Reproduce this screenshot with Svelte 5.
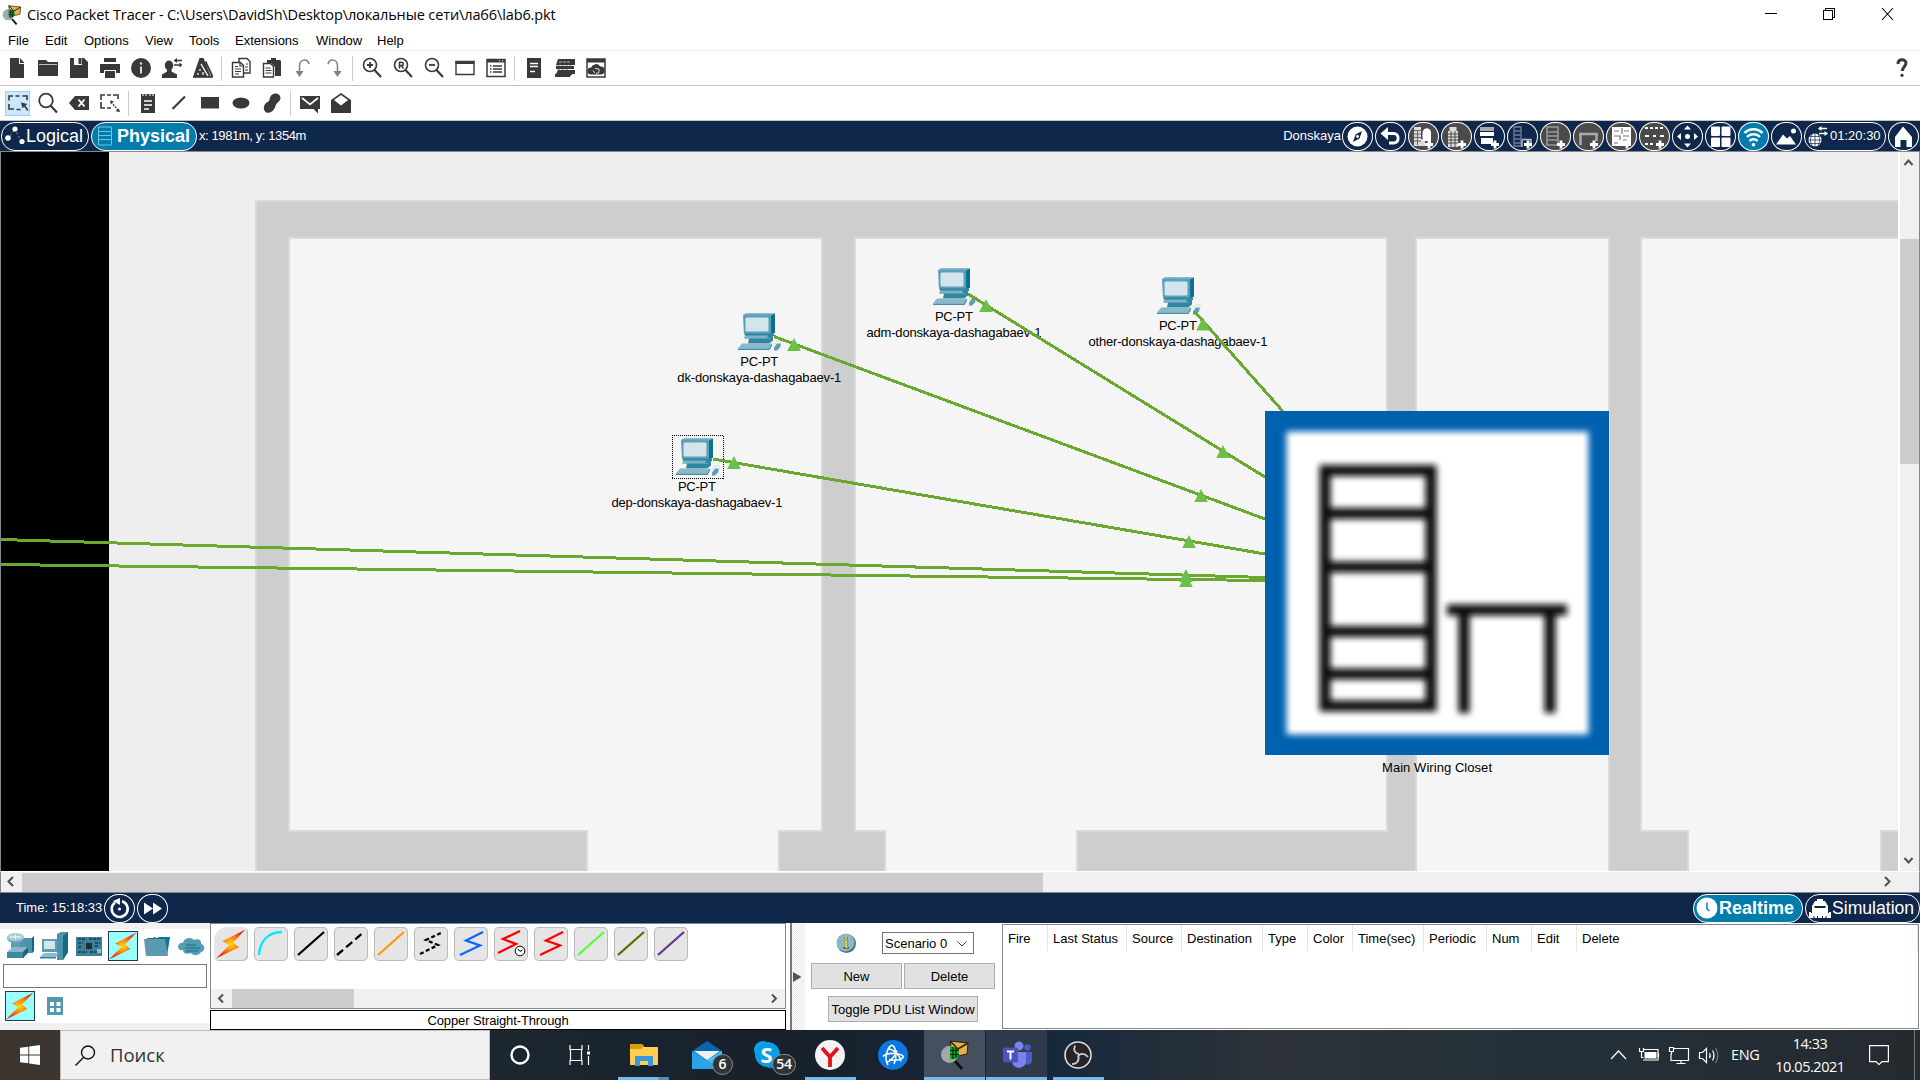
<script>
  const D = '#38393b';
  const wrap = (body, w = 22, h = 22) =>
    `<svg width="${w}" height="${h}" viewBox="0 0 ${w} ${h}" fill="none" style="display:block">${body}</svg>`;

  const docLines = `<path d="M7 9h8M7 13h8M7 17h5" stroke="#fff" stroke-width="1.6"/>`;

  const fileTools = [
    wrap(`<path d="M4 1h9v6h5v14H4z" fill="${D}"/><path d="M14 1l4.500 5H14z" fill="${D}"/>`),
    wrap(`<path d="M1 3h8l2 2h10v14H1z" fill="${D}"/><path d="M2 7.500h18" stroke="#bbb" stroke-width="1"/>`),
    wrap(`<path d="M2 1h14l4 4v16H2z" fill="${D}"/><path d="M6 1h8v7H6z" fill="#fff"/><path d="M10.500 1h3v6h-3z" fill="${D}"/>`),
    wrap(`<path d="M5 1h12v4H5zM1 7h20v9h-4v-3H5v3H1z" fill="${D}"/><path d="M6 14h10v7H6z" fill="${D}"/>`),
    wrap(`<circle cx="11" cy="11" r="10" fill="${D}"/><path d="M11 9.500v7" stroke="#ddd" stroke-width="2"/><circle cx="11" cy="6.500" r="1.200" fill="#ddd"/>`),
    wrap(`<ellipse cx="8" cy="8.500" rx="4.200" ry="5" fill="${D}"/><path d="M6 12h4.500v2.500l5.500 3V21H1v-3.500l5-3z" fill="${D}"/><path d="M14 3.500h7M13 8h7" stroke="${D}" stroke-width="1.400"/><path d="M16 1v5l-3.500-2.500zM18.500 5.500v5l3-2.500z" fill="${D}"/>`),
    wrap(`<path d="M7.500 1h4L19 20H1z" fill="${D}"/><path d="M9 7l7 12M8 12v2M6 16v2M11 15v3" stroke="#fff" stroke-width="1.300"/><path d="M13.500 4.500l7 15" stroke="${D}" stroke-width="1.800"/><path d="M1 20h20" stroke="${D}" stroke-width="1.600"/>`)
  ];
  const editTools = [
    wrap(`<path d="M9 1.500h8l3 3V16H9z" fill="#fff" stroke="${D}" stroke-width="1.400"/><path d="M2.500 5.500h8l3 3V20h-11z" fill="#fff" stroke="${D}" stroke-width="1.400"/><path d="M10 5.500V9h3.500M5 9.500h3M5 12h6M5 14.500h6M5 17h4M16 7h2M15 10h3M15 13h3" stroke="${D}" stroke-width="1.200"/>`),
    wrap(`<path d="M6 3h4V1h5v2h4l1 1v15h-6V10l-4-4H6z" fill="${D}"/><path d="M2.500 6.500h7l3 3V20h-10z" fill="#fff" stroke="${D}" stroke-width="1.400"/><path d="M4.500 11h5M4.500 13.500h6M4.500 16h6" stroke="${D}" stroke-width="1.200"/>`),
    wrap(`<path d="M7.500 15V9c0-7 8-8 9.500-2" stroke="#808080" stroke-width="1.500"/><path d="M3.500 14h8l-4 6z" fill="#808080"/>`),
    wrap(`<path d="M14.500 15V9c0-7-8-8-9.500-2" stroke="#808080" stroke-width="1.500"/><path d="M10.500 14h8l-4 6z" fill="#808080"/>`)
  ];
  const lens = (inner) =>
    wrap(`<circle cx="9" cy="8" r="6.500" stroke="${D}" stroke-width="1.600"/><path d="M13.500 13l6.500 7" stroke="${D}" stroke-width="2.200"/>${inner}`);
  const viewTools = [
    lens(`<path d="M6 8h6M9 5v6" stroke="${D}" stroke-width="1.800"/>`),
    lens(`<path d="M7.500 11.500V5.200h2a1.500 1.500 0 0 1 0 3.400h-2m2 0l2 3" stroke="${D}" stroke-width="1.600"/>`),
    lens(`<path d="M6 8h6" stroke="${D}" stroke-width="1.800"/>`),
    wrap(`<path d="M2 4.500h18v13H2z" stroke="${D}" stroke-width="1.400"/><path d="M1.500 4h19v3h-19z" fill="${D}"/>`),
    wrap(`<path d="M2 2.500h18v17H2z" stroke="${D}" stroke-width="1.500"/><path d="M2 2.500h18v3H2z" fill="${D}"/><path d="M8 9h9M8 12h9M8 15h9M5 9h1.500M5 12h1.500M5 15h1.500" stroke="${D}" stroke-width="1.500"/><path d="M14 3.800h1M17 3.800h1" stroke="#fff"/>`)
  ];
  const miscTools = [
    wrap(`<path d="M4 1h14v20H4z" fill="${D}"/><path d="M7 6.500h8M7 9.500h8M7 14.500h5" stroke="#fff" stroke-width="1.400"/>`),
    wrap(`<path d="M4 2h17v6H2zM2 9h18v3H2zM4 13h17v4H2zM1 17h15v3H1z" fill="${D}"/><path d="M5 5h11M3 8.500h16M3 12.500h12" stroke="#bbb" stroke-width="1" stroke-dasharray="3 1"/><path d="M15 19l5-5" stroke="${D}" stroke-width="2"/>`),
    wrap(`<path d="M2 2h18v18H2z" stroke="${D}" stroke-width="1.500"/><path d="M2 2h18v3.500H2z" fill="${D}"/><path d="M6 17.500a3.500 3.500 0 0 1 .2-7 5 5 0 0 1 9-1 4 4 0 0 1 1 8z" fill="${D}"/><path d="M8 13.500l2 2.500M10 11.500l4 .5v3.500l-3 1" stroke="#ddd" stroke-width="1"/>`)
  ];
  const toolGroups = [fileTools, editTools, viewTools, miscTools];

  const drawGroups = [
    [
      wrap(`<path d="M2 8.500V4h4M8.500 4h4M15.500 4H20v4M2 12v5h5M9.500 17.500h4" stroke="${D}" stroke-width="1.600"/><path d="M14 10.500l6.500 1.500-2 1.500 3 4.500-1.200 1-3.300-4.500-1.500 2z" fill="${D}"/>`),
      wrap(`<circle cx="9" cy="8.500" r="6.800" stroke="${D}" stroke-width="1.800"/><path d="M13.500 13.500l6.500 7" stroke="${D}" stroke-width="2.200"/>`),
      wrap(`<path d="M1 11l6-7h14v14H7z" fill="${D}"/><path d="M10.500 7.500l6 7M16.500 7.500l-6 7" stroke="#fff" stroke-width="1.900"/>`),
      wrap(`<path d="M2 8V3h4M8 3h4M14 3h5v4M2 10v6h4M8 16h4" stroke="${D}" stroke-width="1.600"/><path d="M12 10l7 8" stroke="${D}" stroke-width="1.200" stroke-dasharray="2 1"/><path d="M11 8.500l4 .8-3.200 2.600zM21 20l-4.500-.8 3.400-2.700z" fill="${D}"/>`)
    ],
    [
      wrap(`<path d="M4 2h14v19H4z" fill="${D}"/><path d="M6 1v3M9 1v3M13 1v3M16 1v3" stroke="#fff"/>${docLines}`),
      wrap(`<path d="M4.500 17L17 4.500" stroke="${D}" stroke-width="2.200"/>`),
      wrap(`<path d="M2 5h18v11.500H2z" fill="${D}"/>`),
      wrap(`<ellipse cx="11" cy="11" rx="8.500" ry="5.500" fill="${D}"/>`),
      wrap(`<path d="M9 5.500c2-6 10.500-5 10.500.5-.3 4-4 4-5 8-1.500 6-7.500 8.500-10.500 5.500-2.500-3-.8-8 2.500-9.500 2-1 1.500-1.500 2.500-4.500z" fill="${D}"/>`)
    ],
    [
      wrap(`<path d="M1 4h20v13h-2v4.500L14.500 17H1z" fill="${D}"/><path d="M3 6l8 6.500L19 6" stroke="#fff" stroke-width="1.700"/>`),
      wrap(`<path d="M1 8l10-7 10 7v13H1z" fill="${D}"/><path d="M4 8l7-5 7 5-7 5.500z" fill="#fff"/>`)
    ]
  ];

  const plus = `<path d="M17 22.500h8M21 18.500v8" stroke="#fff" stroke-width="2.800"/>`;
  const W = (b) => wrap(b, 31, 29);
  const physTools = [
    { g: W(`<circle cx="15.500" cy="14.500" r="10" fill="#fff"/><path d="M20 9l-2.500 7.500L11 20l2.500-7.500z" fill="#0f274b"/><circle cx="15.500" cy="14.500" r="1.400" fill="#fff"/>`) },
    { g: W(`<path d="M9 11.500h10a4.800 4.800 0 0 1 0 9.500H14" stroke="#fff" stroke-width="2.800"/><path d="M13 5v13l-7.500-6.500z" fill="#fff"/>`) },
    { tone: 'gray', g: W(`<path d="M6 5h7v19H6zM13 17h4v7h-4z" fill="#ddd"/><path d="M14.500 16v-5c0-6 8.500-6 8.500 0v10h-3V12h-2v4z" fill="#fff"/><path d="M15 11c0-6 8-6 8 0v8h-8z" fill="#fff"/><path d="M6 8.500h7M6 12h7M6 15.500h7M6 19h7M9.500 8v15" stroke="#666" stroke-width="1"/>${plus}`) },
    { tone: 'gray', g: W(`<path d="M7 9h10v16H7zM8.500 5h7v4h-7z" fill="#ddd"/><path d="M7 12h10M7 15h10M7 18h10M7 21h10M10 9v16M14 9v16" stroke="#4b4b4b" stroke-width="1"/>${plus}`) },
    { g: W(`<path d="M6 5h14v4H6z" fill="#aaa"/><path d="M6 10h14v4H6zM7 16h12v6H7z" fill="#fff"/>${plus}`) },
    { g: W(`<path d="M7 5h7v19H7zM7 9h7M7 13h7M7 17h7M7 21h7" stroke="#6f7c96" stroke-width="1.300"/><path d="M15 17.500h9v7M15 18v7" stroke="#bbb" stroke-width="1.500"/>${plus}`) },
    { tone: 'gray', g: W(`<path d="M7 5h11v18H7zM7 10h11M7 14h11M7 18h11" stroke="#999" stroke-width="1.600"/>${plus}`) },
    { tone: 'gray', g: W(`<path d="M6 12h19M7.500 13v10M23.500 13v6" stroke="#aaa" stroke-width="2.500"/>${plus}`) },
    { tone: 'gray', g: W(`<path d="M6 5h19v19H6z" fill="#fff"/><path d="M8 9h5M16 6v6M18 9h5M8 14h6v4M17 14h6M17 18h4M8 21h4" stroke="#777" stroke-width="1.200"/>${plus}`) },
    { tone: 'gray', g: W(`<path d="M6 6h19M6 22h10" stroke="#fff" stroke-width="2" stroke-dasharray="3 2"/><path d="M6 14h4M14 14h3M21 14h4" stroke="#fff" stroke-width="2"/>${plus}`) },
    { g: W(`<circle cx="15.500" cy="14.500" r="2.500" fill="#fff"/><path d="M15.500 3.500l3.500 4h-7zM15.500 25.500l3.500-4h-7zM5 14.500l4-3.500v7zM26 14.500L22 11v7z" fill="#fff"/>`) },
    { g: W(`<rect x="6" y="4.500" width="9" height="9.500" rx="1" fill="#fff"/><rect x="16.500" y="4.500" width="9" height="9.500" rx="1" fill="#fff"/><rect x="6" y="15.500" width="9" height="9.500" rx="1" fill="#fff"/><rect x="16.500" y="15.500" width="9" height="9.500" rx="1" fill="#fff"/>`) },
    { tone: 'on', g: W(`<path d="M6.500 11a12.500 12.500 0 0 1 18 0M9 15a9 9 0 0 1 13 0M11.500 19a5.500 5.500 0 0 1 8 0" stroke="#fff" stroke-width="2.500"/><circle cx="15.500" cy="22.800" r="1.800" fill="#fff"/>`) },
    { g: W(`<path d="M5 22.500l7-10 4 4 3-2.500 6 8.500z" fill="#fff"/><circle cx="22.500" cy="9" r="2.500" fill="#fff"/>`) }
  ];
  const globe = wrap(`<circle cx="9" cy="16" r="6.500" fill="#fff"/><path d="M2.500 16h13M9 9.500v13M4 12.500h10M4 19.500h10M6 10.500c-2 4-2 7 0 11M12 10.500c2 4 2 7 0 11" stroke="#0f274b" stroke-width=".7"/><path d="M13 4.500h8M13 9.500h8" stroke="#fff" stroke-width="1.500"/><path d="M15.500 2v5L12 4.500zM18.500 7v5l3.500-2.500z" fill="#fff"/>`, 23, 25);
  const home = W(`<path d="M15 4.500L24 15v10h-5.500v-7h-6v7H7V15z" fill="#fff"/>`);

  const menus = ['File', 'Edit', 'Options', 'View', 'Tools', 'Extensions', 'Window', 'Help'];
  const menuWidths = [37, 39, 61, 44, 46, 81, 61, 41];

  const bolt = (s) =>
    `<svg width="${s}" height="${s}" viewBox="0 0 30 30" style="display:block"><defs><radialGradient id="spark"><stop offset="0" stop-color="#ffe000"/><stop offset=".45" stop-color="#ff8a12"/><stop offset="1" stop-color="#ec2a1c"/></radialGradient></defs><path d="M28.500 1.500L7 12.500l6.500 3.500L1 28.500l21.500-10.500-5.500-4.500z" fill="url(#spark)"/></svg>`;

  const categories = [
    wrap(`<path d="M13 6h13l2-2v15l-2 2H13z" fill="#4d93ab"/><path d="M26 6l2-2v15l-2 2z" fill="#15677f"/><path d="M5 7h9v9H5z" fill="#5a9fb5"/><ellipse cx="9.500" cy="6.500" rx="8.500" ry="4.500" fill="#6fa9bc"/><ellipse cx="9.500" cy="5" rx="8.500" ry="4" fill="#a8cdd8"/><path d="M4 5h11M9.500 2.500v5" stroke="#fff"/><path d="M1 20l6-5h15l-5 5z" fill="#86b8c8"/><path d="M1 20h17v6H1z" fill="#3d88a2"/><path d="M17 20l5-5v6l-5 5z" fill="#15677f"/>`, 29, 28),
    wrap(`<path d="M17 2l4-2h7v20l-5 8h-6z" fill="#4a93ab"/><path d="M23 4l5-4v20l-5 8z" fill="#136c86"/><path d="M2 7h15v13H2z" fill="#5b9fb5"/><path d="M4 9h11v8H4z" fill="#d5e7ed"/><path d="M0 25l4-4h15l-3 4z" fill="#8db9c8"/><path d="M0 25h16v1.500H0z" fill="#2f86a0"/>`, 29, 28),
    wrap(`<path d="M1 5h26v19H1z" fill="#3d7f96"/><path d="M11 11h6v6h-6z" fill="#17313b"/><path d="M3 7h8M14 7h11M3 11h5M20 11h5M3 15h4M20 14h4M3 20h9M15 20h10" stroke="#143f50" stroke-width="1.500" stroke-dasharray="3 1"/><path d="M22 17h4v4h-4z" fill="#88bed0"/>`, 28, 28),
    bolt(30),
    wrap(`<path d="M4 4h6l1-1 3 1 2-1h11l-3 19H5z" fill="#14778f"/><path d="M1 5h21l3 17H3z" fill="#5b9bb1"/>`, 28, 25),
    wrap(`<path d="M3 15c-4-3-1-8 3-7 1-6 9-6 11-3 5-2 8 1 7 4 5 1 4 7 0 8-2 4-8 4-10 1-5 2-8 0-8-3z" fill="#559bb2"/><path d="M9 10h10M8 13h15M9 16h12" stroke="#2b7d98" stroke-width="1.300"/>`, 28, 23)
  ];

  const cables = [
    { c: '', bolt: true },
    { c: '#00e8ff', d: 'M5 28C6 14 14 5 28 5' },
    { c: '#000', d: 'M4 28L30 5' },
    { c: '#000', d: 'M3 28L30 5', dash: '8 4' },
    { c: '#ff9900', d: 'M4 28L30 5' },
    { c: '#000', d: 'M6 27L24 18 12 13 29 5', dash: '4 2.5' },
    { c: '#0a66ff', d: 'M6 28L26 18.500 12 13.500 29 5' },
    { c: '#f00', d: 'M4 26L22 17 9 12 26 4', clock: true },
    { c: '#f00', d: 'M6 28L26 18.500 12 13.500 29 5' },
    { c: '#55ff2a', d: 'M4 28L30 5' },
    { c: '#666600', d: 'M4 28L30 5' },
    { c: '#663399', d: 'M4 28L30 5' }
  ];

  const columns = [
    ['Fire', 45], ['Last Status', 79], ['Source', 55], ['Destination', 81], ['Type', 45], ['Color', 45],
    ['Time(sec)', 71], ['Periodic', 63], ['Num', 45], ['Edit', 45], ['Delete', 341]
  ];

  const pcs = [
    { x: 738, y: 313.5, cx: 759.3, label: 'dk-donskaya-dashagabaev-1', w: 164 },
    { x: 933, y: 268.5, cx: 953.9, label: 'adm-donskaya-dashagabaev-1', w: 175 },
    { x: 676, y: 438.5, cx: 696.9, label: 'dep-donskaya-dashagabaev-1', w: 171 },
    { x: 1157, y: 277.5, cx: 1177.9, label: 'other-donskaya-dashagabaev-1', w: 179 }
  ];
  const links = [
    [968, 294, 1265, 477], [774, 336.500, 1265, 519], [713, 459, 1265, 554],
    [1194, 311, 1283.500, 412], [0, 539.500, 1265, 577.500], [0, 564.500, 1265, 580.500]
  ];
  const ticks = [
    [794, 338], [986, 299], [734, 456], [1203, 317.5], [1223, 445], [1201, 489], [1189, 535], [1186, 569], [1186, 574]
  ];
  const walls = [
    [256, 200, 1650, 39], [256, 200, 33, 680], [822, 230, 33, 650], [1387, 230, 29, 650], [1609, 230, 32, 650],
    [256, 830, 331, 50], [779, 830, 106, 50], [1077, 830, 339, 50], [1609, 830, 79, 50], [1881, 830, 30, 50]
  ];

  const tracer = (s) =>
    `<svg width="${s}" height="${s}" viewBox="0 0 30 30" style="display:block"><path d="M10 1l18 2-1 11-14 3z" fill="#e3b347" stroke="#2a2010"/><path d="M10 1l8 8 10-6" fill="none" stroke="#2a2010" stroke-width="1.500"/><circle cx="9.500" cy="14.500" r="8.500" fill="#a5a8aa"/><path d="M10 7c5-1 9 3 9 7s-4 6-9 5z" fill="#0fa32a"/><path d="M13 7v12M16 8v10M10 10.500h9M10 14.500h9" stroke="#022b08" stroke-width="1.200"/><path d="M15 21l7 8" stroke="#111" stroke-width="2.800"/></svg>`;

  const apps = [
    { w: 60, g: wrap(`<circle cx="15" cy="15" r="8.500" stroke="#fff" stroke-width="2.400"/>`, 30, 30) },
    { w: 60, g: wrap(`<path d="M5 5v4.500h12V5M5 25v-4.500h12V25M5.500 9.500h11v11h-11z" stroke="#fff" stroke-width="1.200"/><path d="M23.500 5v5M23.500 16v9" stroke="#fff" stroke-width="1.200"/><path d="M22 11.500h3v3h-3z" fill="#fff"/>`, 30, 30) },
    { w: 67, bar: 'pair', g: wrap(`<path d="M1 4h12l2 2v5H1z" fill="#dd9c00"/><path d="M1 7h28v18H1z" fill="#ffcd52"/><path d="M1 7h13l-2 2H1z" fill="#dd9c00"/><path d="M6 26v-9q0-1 1-1h16q1 0 1 1v9h-5v-5h-8v5z" fill="#3b96db"/>`, 30, 30) },
    { w: 60, badge: '6', g: wrap(`<path d="M0 11L15 1l15 10v17H0z" fill="#0a64b4"/><path d="M0 11l15 9L30 11v18H0z" fill="#2aa3e8"/><path d="M15 20L30 11v18z" fill="#46c3f4"/><path d="M2 11h26l-13 9z" fill="#f0f0f0"/>`, 30, 30) },
    { w: 62, badge: '54', g: `<svg width="30" height="30" viewBox="0 0 30 30" style="display:block"><circle cx="10" cy="10" r="9" fill="#11a5ea"/><circle cx="19" cy="19" r="9.500" fill="#0b78cf"/><circle cx="14.500" cy="14.500" r="12.500" fill="#0a9ee6"/><text x="13.500" y="22.500" text-anchor="middle" font-family="Open Sans" font-weight="700" font-size="22" fill="#fff">S</text></svg>` },
    { w: 62, bar: 'short', g: wrap(`<circle cx="15" cy="15" r="15" fill="#f3f3f3"/><path d="M7 8l8 9 8-9M15 16v11" stroke="#e0121a" stroke-width="3.800"/>`, 30, 30) },
    { w: 63, g: wrap(`<circle cx="15" cy="15" r="15" fill="#0a78e0"/><path d="M10 25C5 17 11 4 14.500 5.500 18 7 19 18 16 24M5 16.500c5-5 18-3 20-.5s-7 5.500-14 3.500M10.500 9c5 0 13 8 12 12.500M19 10.500C17 17 11 23 8 22" stroke="#fff" stroke-width="1.600"/>`, 30, 30) },
    { w: 61, bar: 'full', tone: 'active', g: tracer(30) },
    { w: 61, bar: 'full', tone: 'open', g: `<svg width="30" height="30" viewBox="0 0 30 30" style="display:block"><circle cx="17" cy="6" r="4.500" fill="#7b83eb"/><circle cx="25.500" cy="7.500" r="3.200" fill="#5059c9"/><path d="M20 12h10v8c0 5-6 6-8 3z" fill="#5059c9"/><path d="M10 12h14v9c0 9-14 9-14 0z" fill="#7b83eb"/><rect x="1" y="7.500" width="15" height="15" rx="1.500" fill="#4b53bc"/><path d="M5 11.500h7M8.500 11.500v8" stroke="#fff" stroke-width="2" fill="none"/></svg>` },
    { w: 62, bar: 'short', g: wrap(`<circle cx="15" cy="15" r="13" fill="#262427" stroke="#ddd" stroke-width="1.600"/><path d="M12 5.500c-2 5 0 8 4 8.500M25 17c-3-4-8-4-10-.5M9 24c5 0 8-4 6-8.500" stroke="#cfcfcf" stroke-width="1.800"/>`, 30, 30) }
  ];
</script>

{#snippet html(s, cls)}<span class={cls}>{@html s}</span>{/snippet}

<div class="app">
  <header class="title">
    {@render html(tracer(20), 'logo')}
    <span class="caption">Cisco Packet Tracer - C:\Users\DavidSh\Desktop\локальные сети\лаб6\lab6.pkt</span>
    <span class="sys">
      <svg width="130" height="28" viewBox="0 0 130 28" fill="none" stroke="#000" stroke-width="1.1" shape-rendering="crispEdges"><path d="M0 13.500h12M58.500 10.500h9v9h-9zM60.500 10V8.500h9v9H68" /><path d="M117 8l11 12M128 8l-11 12" shape-rendering="auto" /></svg>
    </span>
  </header>

  <nav class="menu">
    {#each menus as m, i}<span style="width:{menuWidths[i]}px">{m}</span>{/each}
  </nav>

  <div class="tools first">
    {#each toolGroups as group, gi}
      {#if gi}<i class="sep"></i>{/if}
      {#each group as g}{@render html(g, 'tool')}{/each}
    {/each}
    <span class="help"><svg width="14" height="20" viewBox="0 0 14 20" fill="none"><path d="M3 6c0-6 8-5 8-1 0 3.500-3.500 4-3.800 8" stroke="#38393b" stroke-width="3" /><circle cx="7" cy="17.300" r="1.600" fill="#38393b" /></svg></span>
  </div>

  <div class="tools second">
    {#each drawGroups as group, gi}
      {#if gi}<i class="sep"></i>{/if}
      {#each group as g, i}{@render html(g, gi === 0 && i === 0 ? 'tool picked' : 'tool')}{/each}
    {/each}
  </div>

  <div class="bar">
    <button class="pill logical">
      <svg width="23" height="26" viewBox="0 0 23 26"><path d="M6 16l7-10 6 12" stroke="#8896b0" stroke-dasharray="2 2" fill="none" /><circle cx="13" cy="6" r="2.600" fill="#fff" /><circle cx="6" cy="15" r="2.800" fill="#fff" /><circle cx="20" cy="18.500" r="2.600" fill="#fff" /></svg>Logical
    </button>
    <button class="pill on physical">
      <svg width="16" height="20" viewBox="0 0 16 20"><path d="M1.500 1h13v18h-13zM1.500 5.500h13M1.500 9.500h13M1.500 13.500h13" stroke="#6fc3dc" fill="none" /></svg>Physical
    </button>
    <span class="coords">x: 1981m, y: 1354m</span>
    <span class="place">Donskaya</span>
    {#each physTools as t}<span class="round {t.tone ?? ''}">{@html t.g}</span>{/each}
    <span class="pill clock">{@html globe}01:20:30</span>
    <span class="round">{@html home}</span>
  </div>

  <div class="workspace">
    <svg class="floor" width="1897" height="719" viewBox="1 152 1897 719">
      <defs>
        <filter id="soft" x="-10%" y="-10%" width="120%" height="120%"><feGaussianBlur stdDeviation="3.2" /></filter>
      </defs>
      <rect x="1" y="152" width="1900" height="720" fill="#eee" />
      <rect x="1" y="152" width="108" height="720" fill="#000" />
      <rect x="256" y="202" width="1650" height="680" fill="#f5f5f5" />
      <g fill="#dadada">
        {#each walls as [x, y, w, h]}<rect x={x - 1} y={y} width={w + 2} height={h} />{/each}
      </g>
      <g fill="#cecece">
        {#each walls as [x, y, w, h]}<rect x={x + 1} y={y + 2} width={w - 2} height={h - 4} />{/each}
      </g>
      {#each pcs as p}
        <g transform="translate({p.x} {p.y})">
          <path d="M5 2l3-2h29v19l-4 2H6z" fill="#5aa0b8" />
          <path d="M33 2l4-2v19l-4 2z" fill="#0d708c" />
          <path d="M5 1.500L8 0h29l-4 2z" fill="#6fabc0" />
          <rect x="7.500" y="4" width="23" height="14" rx="1.500" fill="#d3e4eb" />
          <path d="M7 20h29v2l-3 3H7z" fill="#2f86a0" />
          <path d="M7 22h23l-1 3H6z" fill="#7eb2c5" />
          <path d="M11 25h21l3-2v4l-4 3H10z" fill="#2f86a0" />
          <path d="M4 30h30l-2 5H0z" fill="#8ab8c9" />
          <path d="M0 35h31l3-5v2l-2.500 4.500H0z" fill="#3f8fa8" />
          <path d="M36 34l3-4h4l-1 4-3 3h-3z" fill="#5a9fb6" />
          <path d="M36 31c4-6 9-4 7-1" fill="none" stroke="#c7dbe3" />
        </g>
        <text x={p.cx} y={p.y + 52} textLength="38">PC-PT</text>
        <text x={p.cx} y={p.y + 68.5} textLength={p.w}>{p.label}</text>
      {/each}
      <path d="M672 435.500h52M672 478.500h52M672.500 435v44M723.500 436v43" fill="none" stroke="#000" stroke-dasharray="1 1" shape-rendering="crispEdges" />
      <g stroke="#6ba82f" stroke-width="3" shape-rendering="crispEdges">
        {#each links as [x1, y1, x2, y2]}<line {x1} {y1} {x2} {y2} />{/each}
      </g>
      {#each ticks as [x, y]}<path d="M{x} {y}l6.800 13h-13.600z" fill="#6cc04a" />{/each}
      <rect x="1265" y="411" width="344" height="344" fill="#0061af" />
      <rect x="1286.5" y="431.5" width="302" height="303" fill="#fff" filter="url(#soft)" />
      <rect x="1292" y="437" width="291" height="292" fill="#fff" />
      <g stroke="#080808" stroke-width="11" fill="none" filter="url(#soft)">
        <path d="M1325 470.500h106V706h-106zM1325 513.500h106M1325 567h106M1325 631.500h106M1325 674h106M1447 610h120M1464 610v103M1550 610v103" />
      </g>
      <text x="1437" y="772" textLength="110">Main Wiring Closet</text>
    </svg>
    <div class="vscroll">
      <svg width="19" height="20" viewBox="0 0 19 20"><path d="M4.500 13l4-4.500 4 4.500" /></svg>
      <i class="vthumb"></i>
      <svg class="end" width="19" height="20" viewBox="0 0 19 20"><path d="M4.500 7l4 4.500 4-4.500" /></svg>
    </div>
  </div>
  <div class="hscroll">
    <svg width="21" height="20" viewBox="0 0 21 20"><path d="M12 5L7.500 9.500 12 14" /></svg>
    <i class="hthumb"></i>
    <svg class="far" width="21" height="20" viewBox="0 0 21 20"><path d="M9 5l4.500 4.500L9 14" /></svg>
  </div>

  <div class="bar lower">
    <span class="time">Time: 15:18:33</span>
    <span class="round">{@html W(`<path d="M11 8.500a8 8 0 1 0 7-1.200" stroke="#fff" stroke-width="2.600"/><path d="M9 7l7-3v7z" fill="#fff"/><circle cx="15.500" cy="15" r="1.600" fill="#fff"/>`)}</span>
    <span class="round">{@html W(`<path d="M7 8.500l9 6-9 6zM16 8.500l9 6-9 6z" fill="#fff"/>`)}</span>
    <button class="pill on realtime">
      <svg width="22" height="22" viewBox="0 0 22 22"><circle cx="11" cy="11" r="10.500" fill="#fff" /><path d="M11 5.500v6.500l2.500 2" stroke="#027cad" stroke-width="1.500" fill="none" /></svg>Realtime
    </button>
    <button class="pill simulation">
      <svg width="22" height="22" viewBox="0 0 22 22"><path d="M3 18V9l3-5h2V2h6v2h2l3 5v7h1v-1h2v6H0v-6h2v1h1z" fill="#fff" /><path d="M5.500 10h11" stroke="#0f274b" stroke-width="2" /><path d="M5 19v2M8.500 19v2M13.500 19v2M17 19v2" stroke="#0f274b" stroke-width="1" /></svg>Simulation
    </button>
  </div>

  <section class="panel">
    <div class="devices">
      <div class="cats">{#each categories as c, i}<span class="cat" class:sel={i === 3}>{@html c}</span>{/each}</div>
      <div class="field"></div>
      <div class="subs">
        <span class="cat sel">{@html bolt(30)}</span>
        <svg width="16" height="20" viewBox="0 0 16 20"><path d="M0 1h16v18H0z" fill="#5299b0" /><path d="M3 6h4v4H3zM9.500 6h4v4h-4zM3 12h4v4H3zM9.500 12h4v4h-4z" fill="#fff" /></svg>
      </div>
    </div>

    <div class="cables">
      <div class="tray">
        <div class="row">
          {#each cables as c}
            <span class="cable" class:cut={c.bolt}>
              {#if c.bolt}{@html bolt(32)}{:else}
                <svg width="34" height="34" viewBox="0 0 34 34" fill="none">
                  <path d={c.d} stroke={c.c} stroke-width="2.300" stroke-dasharray={c.dash} />
                  {#if c.clock}<circle cx="26" cy="24" r="4.800" fill="#fff" stroke="#000" /><path d="M24 22l2 2.500 2.500-1.500" stroke="#000" />{/if}
                </svg>
              {/if}
            </span>
          {/each}
        </div>
        <div class="trayscroll">
          <svg width="21" height="19" viewBox="0 0 21 19"><path d="M12 5.500L8 9.500l4 4" /></svg>
          <i></i>
          <svg class="far" width="21" height="19" viewBox="0 0 21 19"><path d="M8 5.500l4 4-4 4" /></svg>
        </div>
      </div>
      <div class="cablename">Copper Straight-Through</div>
    </div>

    <div class="split"><svg width="9" height="10" viewBox="0 0 9 10"><path d="M0 0l8.500 5L0 10z" fill="#555" /></svg></div>

    <div class="scenario">
      <div class="srow">
        <svg width="20" height="20" viewBox="0 0 20 20"><circle cx="10.500" cy="10.500" r="9.500" fill="#456e7d" /><circle cx="9.500" cy="9.500" r="9" fill="#8cb7c5" /><path d="M8 5h4M8 8.500h3V15M7 15h6" stroke="#6b7238" stroke-width="2.200" fill="none" /><path d="M8.500 5h2.500M8.500 8.500h2V15" stroke="#f0e44a" stroke-width="1.600" fill="none" /></svg>
        <span class="combo">Scenario 0<svg width="10" height="6" viewBox="0 0 10 6"><path d="M.5.5L5 5 9.500.5" fill="none" stroke="#444" /></svg></span>
      </div>
      <div class="brow"><button>New</button><button>Delete</button></div>
      <button class="toggle">Toggle PDU List Window</button>
    </div>

    <div class="list">
      {#each columns as [name, w]}<span style="width:{w}px">{name}</span>{/each}
    </div>
  </section>

  <footer class="taskbar">
    <span class="start"><svg width="20" height="20" viewBox="0 0 20 20" fill="#fff"><path d="M0 2.800l8.300-1.100v7.800H0zM9.200 1.500L20 0v9.500H9.200zM0 10.400h8.300v7.900L0 17.200zM9.200 10.400H20V20L9.200 18.500z" /></svg></span>
    <span class="search"><svg width="21" height="21" viewBox="0 0 21 21" fill="none" stroke="#111" stroke-width="1.400"><circle cx="13" cy="7.500" r="6.500" /><path d="M8.500 12.500L.5 20.500" /></svg>Поиск</span>
    {#each apps as a}
      <span class="appcell {a.tone ?? ''} {a.bar ?? ''}" style="width:{a.w}px">{@html a.g}{#if a.badge}<b class="badge" class:wide={a.badge.length > 1}>{a.badge}</b>{/if}</span>
    {/each}
    <span class="status">
      <svg width="120" height="24" viewBox="0 0 120 24" fill="none" stroke="#fff" stroke-width="1.200">
        <path d="M1 16l7.500-8 7.500 8" />
        <path d="M34 6.500h14v10.500H33M48.500 10v4M29.500 5v3.500h4V5M31.500 8.500v6h2" /><rect x="34.500" y="9" width="12" height="6.500" fill="#fff" stroke="none" />
        <path d="M64 5.500h14.500v12H61V11M71 17.500v3M66.500 20.500h9M59.500 4.500h4v4h-4zM61.500 8.500v3" />
        <path d="M89.500 9.500h3l4-4v14l-4-4h-3zM99.500 10q1.500 2.500 0 5M102.500 7.500q3 5 0 10" /><path d="M105.500 5q4.500 7.500 0 15" stroke="#777" />
      </svg>
      <span class="lang">ENG</span>
      <span class="date"><span>14:33</span><span>10.05.2021</span></span>
      <svg class="note" width="20" height="20" viewBox="0 0 20 20" fill="none" stroke="#fff" stroke-width="1.200"><path d="M.6.6h18.800v16H13l-3 3-3-3H.6z" /></svg>
      <i class="desk"></i>
    </span>
  </footer>
</div>

<style>
  :global(body) { margin: 0; background: #fff; overflow: hidden; }
  .app { width: 1920px; height: 1080px; display: flex; flex-direction: column; background: #fff; color: #000; font: 13px/16px "Liberation Sans", Arial, sans-serif; overflow: hidden; }
  .app * { box-sizing: border-box; }
  svg { display: block; flex: none; }
  button { font: inherit; color: inherit; margin: 0; padding: 0; white-space: nowrap; }

  .title { height: 28px; display: flex; align-items: center; padding-left: 2px; }
  .logo { width: 25px; padding-top: 1px; }
  .caption { padding-top: 1px; font: 14.5px/28px "Open Sans", "Noto Sans", sans-serif; letter-spacing: -0.12px; white-space: nowrap; }
  .sys { margin-left: auto; padding-right: 25px; }
  .menu { height: 23px; display: flex; align-items: center; padding: 4px 0 0 8px; border-bottom: 1px solid #f0f0f0; }
  .menu span { white-space: nowrap; flex: none; }

  .tools { display: flex; align-items: center; padding-left: 1px; border-bottom: 1px solid #c0c0c0; }
  .first, .second { height: 35px; }
  .tool { width: 31px; height: 26px; display: grid; place-items: center; }
  .picked { width: 25px; height: 25px; margin: 0 2px 0 4px; background: #cce8ff; border: 1px solid #99d1ff; }
  .sep { width: 1px; height: 25px; margin: 0 3px; background: #ccc; }
  .help { margin-left: auto; padding-right: 11px; }

  .bar { height: 31px; flex: none; display: flex; align-items: center; background: #0f274b; color: #fff; border-bottom: 1px solid #828790; }
  .pill { height: 29px; border: 1px solid #fff; border-radius: 14px; background: #0f274b; display: flex; align-items: center; flex: none; color: #fff; }
  .pill.on { background: #027cad; font-weight: 700; }
  .logical { width: 88px; margin-left: 1px; font-size: 18px; gap: 1px; }
  .physical { width: 106px; margin-left: 2px; padding-left: 5px; gap: 4px; font-size: 18px; }
  .coords { margin-left: 2px; letter-spacing: -0.4px; }
  .place { margin-left: auto; margin-right: 1px; }
  .round { width: 31px; height: 29px; margin-right: 2px; border-radius: 15px; box-shadow: inset 0 0 0 1px #fff; flex: none; }
  .round.gray { background: #4b4b4b; }
  .round.on { background: #027cad; }
  .clock { width: 82px; padding-left: 1px; margin-right: 2px; gap: 1px; }
  .bar > .round:last-child { margin-right: 1px; }

  .workspace { height: 719px; display: flex; border-left: 1px solid #828790; border-right: 1px solid #828790; }
  .floor text { font: 13px "Liberation Sans", Arial, sans-serif; text-anchor: middle; fill: #000; }
  .vscroll { width: 21px; background: #f0f0f0; border-left: 2px solid #fff; display: flex; flex-direction: column; }
  .vthumb { height: 225px; margin-top: 67px; background: #cdcdcd; }
  .end { margin-top: auto; }
  .vscroll path, .hscroll path, .trayscroll path { fill: none; stroke: #505050; stroke-width: 2; }
  .hscroll { height: 22px; display: flex; align-items: center; background: #f0f0f0; border: 1px solid #828790; border-top-color: #fff; }
  .hthumb { width: 1021px; height: 19px; background: #cdcdcd; }
  .far { margin-left: auto; }
  .hscroll .far { margin-right: 22px; }

  .lower { height: 30px; border-bottom: 0; }
  .time { width: 88px; margin-left: 16px; white-space: nowrap; }
  .realtime { width: 110px; margin-left: auto; margin-right: 2px; padding-left: 2px; gap: 1px; font-size: 18px; }
  .simulation { width: 115px; padding-left: 3px; gap: 1px; font-size: 17.6px; }

  .panel { height: 107px; display: flex; background: #fff; }
  .devices { width: 210px; border: solid #f0f0f0; border-width: 6px 0 7px; padding: 2px 3px 0; }
  .cats { height: 33px; display: flex; padding-left: 2px; }
  .cat { width: 30px; height: 30px; margin-right: 4.300px; display: grid; place-items: center; flex: none; }
  .sel { background: #99ffff; box-shadow: inset 0 0 0 1px #1e3c46; }
  .field { height: 24px; border: 1px solid #767676; }
  .subs { display: flex; align-items: center; padding: 3px 0 0 2px; gap: 8px; }

  .cables { width: 576px; display: flex; flex-direction: column; }
  .tray { height: 86px; border: 1px solid #828790; display: flex; flex-direction: column; }
  .row { display: flex; gap: 6px; padding: 3px 3px 0; }
  .cable { width: 34px; height: 34px; border-radius: 5px; background: #e5e5e5; box-shadow: inset 0 0 0 1px #bbb; flex: none; }
  .cable.cut { border-top-left-radius: 14px; padding: 1px; box-shadow: inset -1px -1px 0 #bbb; }
  .trayscroll { margin-top: auto; height: 19px; background: #f0f0f0; display: flex; }
  .trayscroll i { width: 122px; background: #cdcdcd; }
  .cablename { height: 20px; margin-top: 1px; border: 1px solid #000; text-align: center; line-height: 19px; letter-spacing: -0.12px; }

  .split { width: 15px; margin: 0 3px 0 4px; display: flex; align-items: center; padding-left: 1px; border-left: 2px solid #777; background: repeating-conic-gradient(#e9e9e9 0 25%, #fff 0 50%) 0 0 / 2px 2px; }
  .scenario { width: 191px; padding: 9px 4px 0 3px; display: flex; flex-direction: column; }
  .srow { display: flex; align-items: center; padding-left: 25px; gap: 26px; }
  .combo { width: 92px; height: 22px; border: 1px solid #707070; display: flex; align-items: center; justify-content: space-between; padding: 1px 6px 0 2px; white-space: nowrap; }
  .brow { display: flex; gap: 2px; margin-top: 9px; }
  .brow button, .toggle { height: 26px; padding-top: 1px; background: #e1e1e1; border: 1px solid #adadad; }
  .brow button { width: 91px; }
  .toggle { width: 150px; margin: 7px 0 0 17px; }
  .list { flex: 1; height: 105px; margin: 1px 1px 0 3px; border: 1px solid #828790; display: flex; }
  .list span { height: 26px; flex: none; padding-left: 5px; line-height: 27px; border-right: 1px solid #e5e5e5; white-space: nowrap; }

  .taskbar { height: 50px; display: flex; background: linear-gradient(90deg, #1c2730 0, #1c2730 490px, #17202b 780px, #18293c 1070px, #2d3338 1270px, #243039 1560px, #252a2f 1920px); color: #fff; font-family: "Open Sans", "Noto Sans", sans-serif; }
  .start { width: 60px; background: #3c342f; display: grid; place-items: center; }
  .search { width: 430px; background: #f1f1f1; border: 1px solid #bdbdbd; color: #333; display: flex; align-items: center; padding-left: 14px; gap: 14px; font-size: 18.500px; line-height: 24px; }
  .appcell { position: relative; display: grid; place-items: center; flex: none; }
  .active { background: #454f5d; }
  .open { background: #2f3a4a; margin-left: 1px; }
  .short, .full, .pair { background-image: linear-gradient(#76b9ed, #76b9ed); background-repeat: no-repeat; background-position: 50% 100%; background-size: 51px 3px; }
  .full { background-size: 100% 3px; }
  .pair { background-image: linear-gradient(90deg, #76b9ed 40px, #5a8ab5 41px); }
  .badge { position: absolute; left: 35px; top: 24px; width: 21px; height: 21px; border-radius: 11px; background: #2f3438; border: 1px solid #8b8f93; font: 600 14px/18px "Open Sans", sans-serif; text-align: center; }
  .wide { left: 35px; width: 24px; letter-spacing: -0.3px; }
  .status { margin-left: auto; display: flex; align-items: center; }
  .lang { font-size: 14.500px; width: 38px; padding-left: 1px; letter-spacing: -0.3px; }
  .date { width: 84px; display: flex; flex-direction: column; align-items: center; font-size: 14.500px; line-height: 23px; letter-spacing: -0.45px; }
  .note { margin: 0 25px 0 17px; }
  .desk { width: 6px; height: 50px; border-left: 1px solid #777; }
</style>
